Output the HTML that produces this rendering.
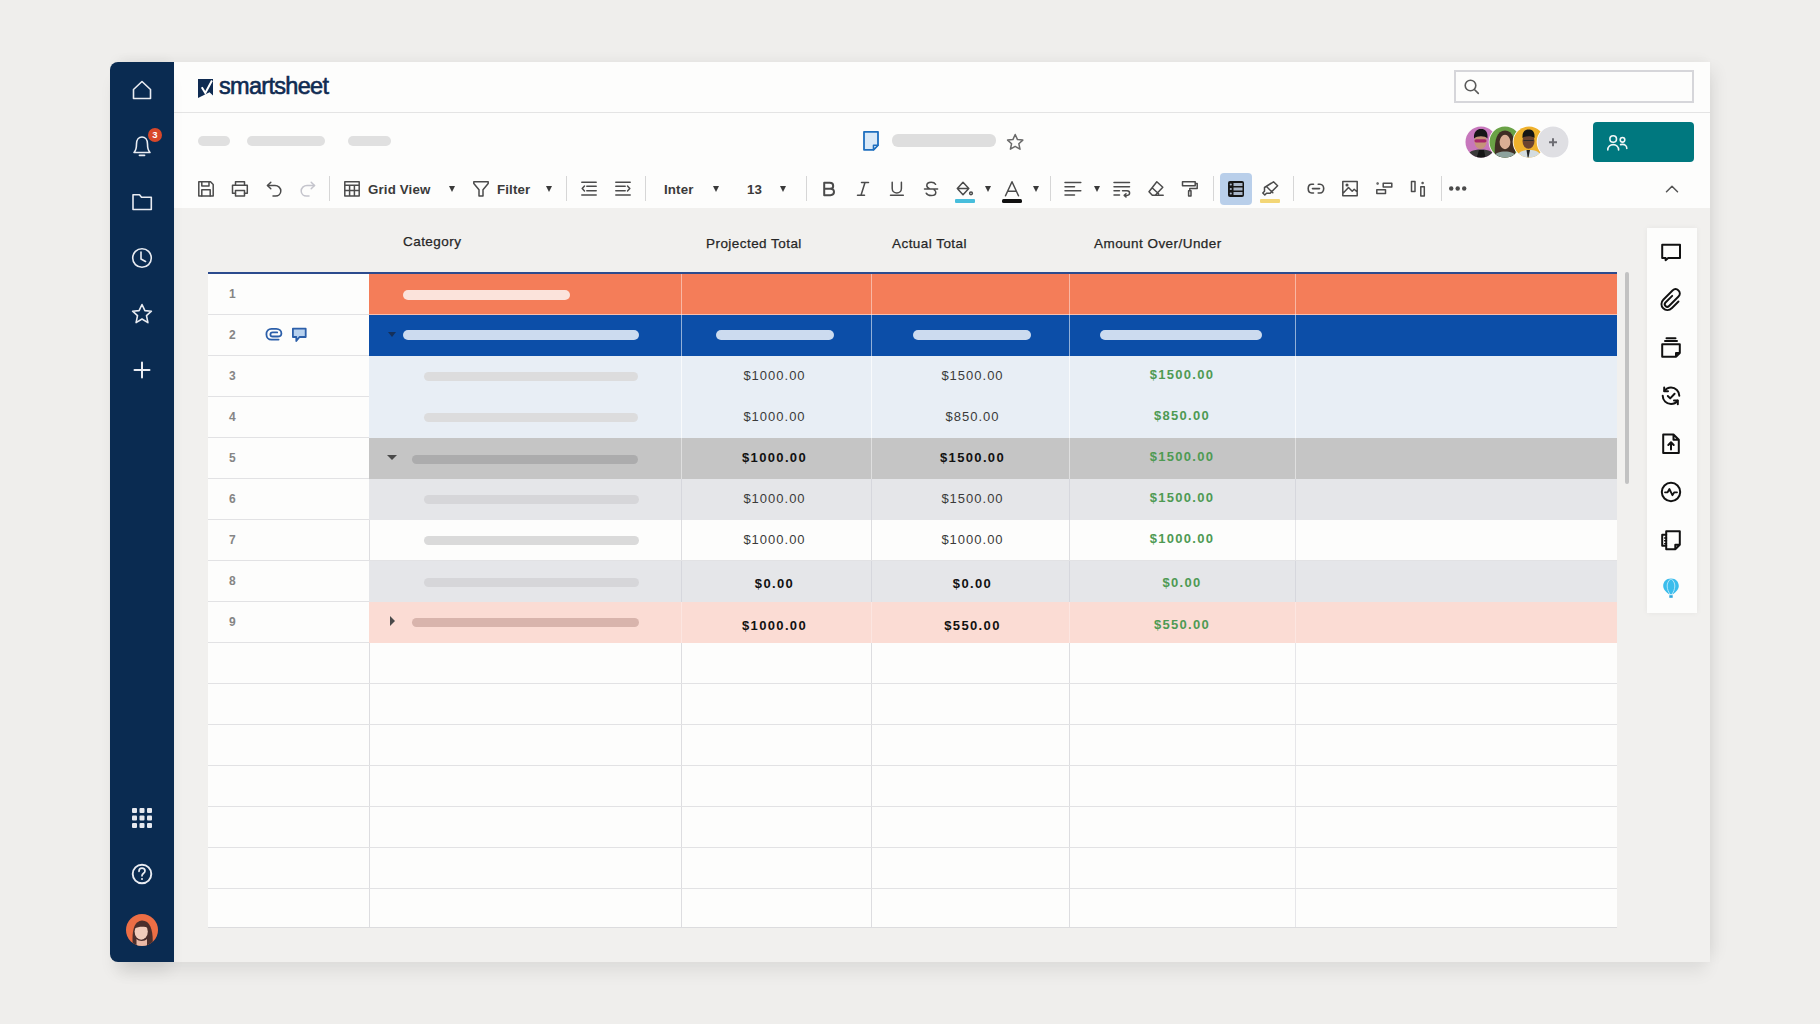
<!DOCTYPE html>
<html><head><meta charset="utf-8">
<style>
*{box-sizing:border-box;margin:0;padding:0}
html,body{width:1820px;height:1024px;overflow:hidden}
body{background:#EFEEEC;font-family:"Liberation Sans",sans-serif;position:relative}
.abs{position:absolute}
#win{left:118px;top:62px;width:1592px;height:900px;background:#F1F0EE;border-radius:0;box-shadow:0 14px 16px -4px rgba(0,0,0,0.07),12px 0 14px -6px rgba(0,0,0,0.06),0 -8px 10px -4px rgba(0,0,0,0.03);overflow:hidden}
#side{left:110px;top:62px;width:64px;height:900px;background:#0A2B51;border-radius:8px 0 0 8px;box-shadow:0 14px 16px -4px rgba(0,0,0,0.07),0 -8px 10px -4px rgba(0,0,0,0.03)}
#head{left:174px;top:62px;width:1536px;height:146px;background:#FDFDFC}
#hdiv{left:174px;top:112px;width:1536px;height:1px;background:#E4E4E4}
.pill{position:absolute;border-radius:6px}
.sic{position:absolute;left:132px;width:20px;height:20px}
.tb{position:absolute;top:180px;width:16px;height:16px}
.sep{position:absolute;top:176px;width:1px;height:25px;background:#D6D6D6}
.tt{position:absolute;top:182px;font-size:13.3px;font-weight:bold;color:#3A3A3A;line-height:16px;letter-spacing:0.15px}
.tri{position:absolute;top:186px;width:0;height:0;border-left:3.5px solid transparent;border-right:3.5px solid transparent;border-top:6px solid #3A3A3A}
.ch{position:absolute;top:236px;font-size:13.5px;color:#262626;line-height:16px;letter-spacing:0.45px;-webkit-text-stroke:0.25px #262626}

.row{position:absolute;left:0;width:1409px;height:41px;border-bottom:1px solid #DCDCDC}
.rn{position:absolute;left:0;top:0;width:161px;height:41px;background:#FDFDFC;border-right:1px solid #D8D8D8}
.rnum{position:absolute;left:22px;top:13px;font-size:12px;font-weight:bold;color:#858585;line-height:14px}
.cell{position:absolute;top:0;height:41px}
.num{position:absolute;font-size:13px;line-height:16px;letter-spacing:1px;color:#3A3A3A;text-align:center}
.b{font-weight:bold;color:#111;letter-spacing:1.35px}
.g{font-weight:bold;color:#4E9A53;letter-spacing:1.3px}
.vl{position:absolute;top:0;width:1px;height:656px}
</style></head><body>
<div id="win" class="abs"></div>
<div id="head" class="abs"></div>
<div id="hdiv" class="abs"></div>
<div id="side" class="abs"></div>

<!-- logo -->
<div class="abs" style="left:219px;top:72px;font-size:23.5px;color:#0F2B52;letter-spacing:-0.7px;-webkit-text-stroke:0.6px #0F2B52;line-height:28px">smartsheet</div>

<!-- breadcrumbs -->
<div class="pill" style="left:198px;top:136px;width:32px;height:10px;background:#E0E0E0"></div>
<div class="pill" style="left:247px;top:136px;width:78px;height:10px;background:#E0E0E0"></div>
<div class="pill" style="left:348px;top:136px;width:43px;height:10px;background:#E0E0E0"></div>
<div class="pill" style="left:892px;top:134px;width:104px;height:13px;background:#DEDEDE"></div>

<!-- search -->
<div class="abs" style="left:1454px;top:70px;width:240px;height:33px;border:2px solid #D6D6DA;background:#FDFDFC"></div>
<!-- share button -->
<div class="abs" style="left:1593px;top:122px;width:101px;height:40px;background:#00787F;border-radius:4px"></div>

<!-- toolbar text -->
<div class="tt" style="left:368px">Grid View</div>
<div class="tri" style="left:449px"></div>
<div class="tt" style="left:497px">Filter</div>
<div class="tri" style="left:546px"></div>
<div class="tt" style="left:664px">Inter</div>
<div class="tri" style="left:713px"></div>
<div class="tt" style="left:747px">13</div>
<div class="tri" style="left:780px"></div>
<div class="tri" style="left:985px"></div>
<div class="tri" style="left:1033px"></div>
<div class="tri" style="left:1094px"></div>
<div class="sep" style="left:329px"></div>
<div class="sep" style="left:566px"></div>
<div class="sep" style="left:645px"></div>
<div class="sep" style="left:806px"></div>
<div class="sep" style="left:1050px"></div>
<div class="sep" style="left:1213px"></div>
<div class="sep" style="left:1293px"></div>
<div class="sep" style="left:1441px"></div>
<div class="abs" style="left:1220px;top:173px;width:32px;height:32px;background:#B9CFEA;border-radius:4px"></div>

<!-- column headers -->
<div class="ch" style="left:403px;top:234px">Category</div>
<div class="ch" style="left:706px">Projected Total</div>
<div class="ch" style="left:892px">Actual Total</div>
<div class="ch" style="left:1094px">Amount Over/Under</div>

<!-- grid -->
<div class="abs" style="left:208px;top:272px;width:1409px;height:656px;background:#FDFDFC"></div>
<div class="abs" style="left:369px;top:272px;width:1px;height:656px;background:#DDDDE0"></div>
<div class="abs" style="left:681px;top:272px;width:1px;height:656px;background:#DDDDE0"></div>
<div class="abs" style="left:871px;top:272px;width:1px;height:656px;background:#DDDDE0"></div>
<div class="abs" style="left:1069px;top:272px;width:1px;height:656px;background:#DDDDE0"></div>
<div class="abs" style="left:1295px;top:272px;width:1px;height:656px;background:#E6E6E9"></div>
<div class="abs" style="left:208px;top:314px;width:1409px;height:1px;background:#E2E2E4"></div>
<div class="abs" style="left:208px;top:355px;width:1409px;height:1px;background:#E2E2E4"></div>
<div class="abs" style="left:208px;top:396px;width:1409px;height:1px;background:#E2E2E4"></div>
<div class="abs" style="left:208px;top:437px;width:1409px;height:1px;background:#E2E2E4"></div>
<div class="abs" style="left:208px;top:478px;width:1409px;height:1px;background:#E2E2E4"></div>
<div class="abs" style="left:208px;top:519px;width:1409px;height:1px;background:#E2E2E4"></div>
<div class="abs" style="left:208px;top:560px;width:1409px;height:1px;background:#E2E2E4"></div>
<div class="abs" style="left:208px;top:601px;width:1409px;height:1px;background:#E2E2E4"></div>
<div class="abs" style="left:208px;top:642px;width:1409px;height:1px;background:#E2E2E4"></div>
<div class="abs" style="left:208px;top:683px;width:1409px;height:1px;background:#E2E2E4"></div>
<div class="abs" style="left:208px;top:724px;width:1409px;height:1px;background:#E2E2E4"></div>
<div class="abs" style="left:208px;top:765px;width:1409px;height:1px;background:#E2E2E4"></div>
<div class="abs" style="left:208px;top:806px;width:1409px;height:1px;background:#E2E2E4"></div>
<div class="abs" style="left:208px;top:847px;width:1409px;height:1px;background:#E2E2E4"></div>
<div class="abs" style="left:208px;top:888px;width:1409px;height:1px;background:#E2E2E4"></div>
<div class="abs" style="left:369px;top:274px;width:1248px;height:41px;background:#F47D59"></div>
<div class="abs" style="left:681px;top:274px;width:1px;height:41px;background:rgba(255,255,255,0.45)"></div>
<div class="abs" style="left:871px;top:274px;width:1px;height:41px;background:rgba(255,255,255,0.45)"></div>
<div class="abs" style="left:1069px;top:274px;width:1px;height:41px;background:rgba(255,255,255,0.45)"></div>
<div class="abs" style="left:1295px;top:274px;width:1px;height:41px;background:rgba(255,255,255,0.45)"></div>
<div class="abs" style="left:369px;top:315px;width:1248px;height:41px;background:#0C4EA8"></div>
<div class="abs" style="left:681px;top:315px;width:1px;height:41px;background:rgba(255,255,255,0.55)"></div>
<div class="abs" style="left:871px;top:315px;width:1px;height:41px;background:rgba(255,255,255,0.55)"></div>
<div class="abs" style="left:1069px;top:315px;width:1px;height:41px;background:rgba(255,255,255,0.55)"></div>
<div class="abs" style="left:1295px;top:315px;width:1px;height:41px;background:rgba(255,255,255,0.55)"></div>
<div class="abs" style="left:369px;top:356px;width:1248px;height:41px;background:#E8EEF5"></div>
<div class="abs" style="left:681px;top:356px;width:1px;height:41px;background:rgba(255,255,255,0.7)"></div>
<div class="abs" style="left:871px;top:356px;width:1px;height:41px;background:rgba(255,255,255,0.7)"></div>
<div class="abs" style="left:1069px;top:356px;width:1px;height:41px;background:rgba(255,255,255,0.7)"></div>
<div class="abs" style="left:1295px;top:356px;width:1px;height:41px;background:rgba(255,255,255,0.7)"></div>
<div class="abs" style="left:369px;top:397px;width:1248px;height:41px;background:#E8EEF5"></div>
<div class="abs" style="left:681px;top:397px;width:1px;height:41px;background:rgba(255,255,255,0.7)"></div>
<div class="abs" style="left:871px;top:397px;width:1px;height:41px;background:rgba(255,255,255,0.7)"></div>
<div class="abs" style="left:1069px;top:397px;width:1px;height:41px;background:rgba(255,255,255,0.7)"></div>
<div class="abs" style="left:1295px;top:397px;width:1px;height:41px;background:rgba(255,255,255,0.7)"></div>
<div class="abs" style="left:369px;top:438px;width:1248px;height:41px;background:#C5C5C5"></div>
<div class="abs" style="left:681px;top:438px;width:1px;height:41px;background:rgba(255,255,255,0.45)"></div>
<div class="abs" style="left:871px;top:438px;width:1px;height:41px;background:rgba(255,255,255,0.45)"></div>
<div class="abs" style="left:1069px;top:438px;width:1px;height:41px;background:rgba(255,255,255,0.45)"></div>
<div class="abs" style="left:1295px;top:438px;width:1px;height:41px;background:rgba(255,255,255,0.45)"></div>
<div class="abs" style="left:369px;top:479px;width:1248px;height:41px;background:#E5E6E9"></div>
<div class="abs" style="left:681px;top:479px;width:1px;height:41px;background:rgba(200,200,210,0.5)"></div>
<div class="abs" style="left:871px;top:479px;width:1px;height:41px;background:rgba(200,200,210,0.5)"></div>
<div class="abs" style="left:1069px;top:479px;width:1px;height:41px;background:rgba(200,200,210,0.5)"></div>
<div class="abs" style="left:1295px;top:479px;width:1px;height:41px;background:rgba(200,200,210,0.5)"></div>
<div class="abs" style="left:369px;top:561px;width:1248px;height:41px;background:#E5E6E9"></div>
<div class="abs" style="left:681px;top:561px;width:1px;height:41px;background:rgba(200,200,210,0.5)"></div>
<div class="abs" style="left:871px;top:561px;width:1px;height:41px;background:rgba(200,200,210,0.5)"></div>
<div class="abs" style="left:1069px;top:561px;width:1px;height:41px;background:rgba(200,200,210,0.5)"></div>
<div class="abs" style="left:1295px;top:561px;width:1px;height:41px;background:rgba(200,200,210,0.5)"></div>
<div class="abs" style="left:369px;top:602px;width:1248px;height:41px;background:#FBDCD4"></div>
<div class="abs" style="left:681px;top:602px;width:1px;height:41px;background:rgba(255,255,255,0.3)"></div>
<div class="abs" style="left:871px;top:602px;width:1px;height:41px;background:rgba(255,255,255,0.3)"></div>
<div class="abs" style="left:1069px;top:602px;width:1px;height:41px;background:rgba(255,255,255,0.3)"></div>
<div class="abs" style="left:1295px;top:602px;width:1px;height:41px;background:rgba(255,255,255,0.3)"></div>
<div class="abs" style="left:369px;top:314px;width:1248px;height:1px;background:rgba(255,255,255,0.5)"></div>
<div class="abs" style="left:208px;top:314px;width:161px;height:1px;background:#E2E2E4"></div>
<div class="abs" style="left:208px;top:355px;width:161px;height:1px;background:#E2E2E4"></div>
<div class="abs" style="left:208px;top:396px;width:161px;height:1px;background:#E2E2E4"></div>
<div class="abs" style="left:208px;top:437px;width:161px;height:1px;background:#E2E2E4"></div>
<div class="abs" style="left:208px;top:478px;width:161px;height:1px;background:#E2E2E4"></div>
<div class="abs" style="left:208px;top:519px;width:161px;height:1px;background:#E2E2E4"></div>
<div class="abs" style="left:208px;top:560px;width:161px;height:1px;background:#E2E2E4"></div>
<div class="abs" style="left:208px;top:601px;width:161px;height:1px;background:#E2E2E4"></div>
<div class="abs" style="left:208px;top:642px;width:161px;height:1px;background:#E2E2E4"></div>
<div class="abs" style="left:208px;top:927px;width:1409px;height:1px;background:#DCDCDE"></div>
<div class="abs" style="left:208px;top:272px;width:1409px;height:2px;background:#2C4B8E"></div>
<div class="abs rnum" style="left:229px;top:287px">1</div>
<div class="abs rnum" style="left:229px;top:328px">2</div>
<div class="abs rnum" style="left:229px;top:369px">3</div>
<div class="abs rnum" style="left:229px;top:410px">4</div>
<div class="abs rnum" style="left:229px;top:451px">5</div>
<div class="abs rnum" style="left:229px;top:492px">6</div>
<div class="abs rnum" style="left:229px;top:533px">7</div>
<div class="abs rnum" style="left:229px;top:574px">8</div>
<div class="abs rnum" style="left:229px;top:615px">9</div>
<div class="pill" style="left:403px;top:290px;width:167px;height:10px;background:#FBE3DB;border-radius:5px"></div>
<div class="pill" style="left:403px;top:330px;width:236px;height:10px;background:#CCDBEF;border-radius:5px"></div>
<div class="pill" style="left:716px;top:330px;width:118px;height:10px;background:#CCDBEF;border-radius:5px"></div>
<div class="pill" style="left:913px;top:330px;width:118px;height:10px;background:#CCDBEF;border-radius:5px"></div>
<div class="pill" style="left:1100px;top:330px;width:162px;height:10px;background:#CCDBEF;border-radius:5px"></div>
<div class="pill" style="left:424px;top:372px;width:214px;height:9px;background:#DCDCDD;border-radius:5px"></div>
<div class="pill" style="left:424px;top:413px;width:214px;height:9px;background:#DCDCDD;border-radius:5px"></div>
<div class="pill" style="left:412px;top:455px;width:226px;height:9px;background:#ACACAD;border-radius:5px"></div>
<div class="pill" style="left:424px;top:495px;width:215px;height:9px;background:#D6D6D9;border-radius:5px"></div>
<div class="pill" style="left:424px;top:536px;width:215px;height:9px;background:#DADADA;border-radius:5px"></div>
<div class="pill" style="left:424px;top:578px;width:215px;height:9px;background:#D6D6D9;border-radius:5px"></div>
<div class="pill" style="left:412px;top:618px;width:227px;height:9px;background:#D8B4AC;border-radius:5px"></div>
<div class="abs" style="left:388px;top:332px;width:0;height:0;border-left:4px solid transparent;border-right:4px solid transparent;border-top:5px solid #15305A"></div>
<div class="abs" style="left:387px;top:455px;width:0;height:0;border-left:5.5px solid transparent;border-right:5.5px solid transparent;border-top:5px solid #4A4A4A"></div>
<div class="abs" style="left:390px;top:616px;width:0;height:0;border-top:5.5px solid transparent;border-bottom:5.5px solid transparent;border-left:5px solid #4A4A4A"></div>
<div class="num" style="left:679.5px;top:368px;width:190px">$1000.00</div>
<div class="num" style="left:873.5px;top:368px;width:198px">$1500.00</div>
<div class="num g" style="left:1069px;top:367px;width:226px">$1500.00</div>
<div class="num" style="left:679.5px;top:409px;width:190px">$1000.00</div>
<div class="num" style="left:873.5px;top:409px;width:198px">$850.00</div>
<div class="num g" style="left:1069px;top:408px;width:226px">$850.00</div>
<div class="num b" style="left:679.5px;top:450px;width:190px">$1000.00</div>
<div class="num b" style="left:873.5px;top:450px;width:198px">$1500.00</div>
<div class="num g" style="left:1069px;top:449px;width:226px">$1500.00</div>
<div class="num" style="left:679.5px;top:491px;width:190px">$1000.00</div>
<div class="num" style="left:873.5px;top:491px;width:198px">$1500.00</div>
<div class="num g" style="left:1069px;top:490px;width:226px">$1500.00</div>
<div class="num" style="left:679.5px;top:532px;width:190px">$1000.00</div>
<div class="num" style="left:873.5px;top:532px;width:198px">$1000.00</div>
<div class="num g" style="left:1069px;top:531px;width:226px">$1000.00</div>
<div class="num b" style="left:679.5px;top:576px;width:190px">$0.00</div>
<div class="num b" style="left:873.5px;top:576px;width:198px">$0.00</div>
<div class="num g" style="left:1069px;top:575px;width:226px">$0.00</div>
<div class="num b" style="left:679.5px;top:617.5px;width:190px">$1000.00</div>
<div class="num b" style="left:873.5px;top:617.5px;width:198px">$550.00</div>
<div class="num g" style="left:1069px;top:616.5px;width:226px">$550.00</div>


<!-- scrollbar -->
<div class="abs" style="left:1625px;top:272px;width:4px;height:212px;background:#C2C2C2;border-radius:2px"></div>
<!-- right panel -->
<div class="abs" style="left:1647px;top:228px;width:50px;height:385px;background:#FDFDFC;box-shadow:0 0 6px rgba(0,0,0,0.05)"></div>

<!-- sidebar icons -->
<svg class="abs" style="left:110px;top:62px" width="64" height="900" viewBox="110 62 64 900" fill="none" stroke="#E9ECF2" stroke-width="1.6" stroke-linejoin="round" stroke-linecap="round">
<path d="M133.5 89.5 L142 81.5 L150.5 89.5 V98.5 H133.5 Z"/>
<path d="M134 152.5 C136 150.5 136.5 148.5 136.5 144 C136.5 139.5 139 137 142 137 C145 137 147.5 139.5 147.5 144 C147.5 148.5 148 150.5 150 152.5 Z"/>
<path d="M139.5 155.3 H144.5" stroke-width="1.8"/>
<path d="M133 194.8 H139.5 L141.5 197.3 H151.3 V209.5 H133 Z"/>
<circle cx="142" cy="258" r="9.3"/>
<path d="M141 252 V259 L145.5 261.5"/>
<path d="M142 304.5 L144.9 310.6 L151.4 311.2 L146.5 315.6 L147.9 322.6 L142 319 L136.1 322.6 L137.5 315.6 L132.6 311.2 L139.1 310.6 Z"/>
<path d="M134.5 370 H149.5 M142 362.5 V377.5" stroke-width="2"/>
<circle cx="142" cy="874" r="9.3" stroke-width="1.9"/>
<path d="M139 871.3 C139 869.3 140.4 868.2 142 868.2 C143.7 868.2 145 869.3 145 871 C145 873.3 142 873.3 142 875.8" stroke-width="1.7"/>
</svg>
<div class="abs" style="left:148px;top:128px;width:14px;height:14px;border-radius:50%;background:#D8482A;color:#fff;font-size:9.5px;font-weight:bold;text-align:center;line-height:14px">3</div>
<div class="abs" style="left:141px;top:877.5px;width:2px;height:2px;background:#E9ECF2;border-radius:1px"></div>
<svg class="abs" style="left:132px;top:808px" width="20" height="20" fill="#E6E9EF">
<rect x="0" y="0" width="5" height="5" rx="1"/><rect x="7.5" y="0" width="5" height="5" rx="1"/><rect x="15" y="0" width="5" height="5" rx="1"/>
<rect x="0" y="7.5" width="5" height="5" rx="1"/><rect x="7.5" y="7.5" width="5" height="5" rx="1"/><rect x="15" y="7.5" width="5" height="5" rx="1"/>
<rect x="0" y="15" width="5" height="5" rx="1"/><rect x="7.5" y="15" width="5" height="5" rx="1"/><rect x="15" y="15" width="5" height="5" rx="1"/>
</svg>
<!-- user avatar -->
<svg class="abs" style="left:126px;top:914px" width="32" height="32" viewBox="0 0 32 32">
<defs><clipPath id="av"><circle cx="16" cy="16" r="16"/></clipPath></defs>
<g clip-path="url(#av)">
<rect width="32" height="32" fill="#EC6E45"/>
<path d="M7 33 C5.5 20 7 7 16 6.5 C25.5 6.5 27.5 19 26.5 33 Z" fill="#4B2F2C"/>
<path d="M10.5 33 V25 C12.5 27.5 19 27.5 21 25 V33 Z" fill="#EBB9A5"/>
<ellipse cx="15.2" cy="17.5" rx="6.6" ry="8.2" fill="#F2CDBB"/>
<path d="M8.6 14.5 C9.2 10 12.4 8.6 16 8.6 C19.6 8.6 22.4 10.4 22.6 14 C18.5 12.2 12.5 12.4 8.6 14.5 Z" fill="#4B2F2C"/>
</g>
</svg>

<!-- logo mark -->
<svg class="abs" style="left:197px;top:78px" width="18" height="22" viewBox="197 78 18 22">
<path d="M198 79 H213 V95.5 L209.5 92.3 L198 98 Z" fill="#0F2B52"/>
<path d="M201.8 87.2 L205.3 93 L212 80.5" fill="none" stroke="#fff" stroke-width="2" stroke-linejoin="miter"/>
</svg>
<!-- sheet icon -->
<svg class="abs" style="left:862px;top:130px" width="20" height="22" viewBox="862 130 20 22">
<path d="M864 131.8 H878 V145.2 L873.5 149.8 H864 Z" fill="#D9E9F8" stroke="#1E6FBF" stroke-width="1.8" stroke-linejoin="round"/>
<path d="M878 145.2 H873.5 V149.8 Z" fill="#fff" stroke="#1E6FBF" stroke-width="1.6" stroke-linejoin="round"/>
</svg>
<!-- star -->
<svg class="abs" style="left:1005px;top:131px" width="20" height="21" viewBox="1005 131 20 21" fill="none" stroke="#6A6A6A" stroke-width="1.5" stroke-linejoin="round">
<path d="M1015.2 134.5 L1017.5 139.6 L1022.8 140.1 L1018.8 143.7 L1020 149.2 L1015.2 146.4 L1010.4 149.2 L1011.6 143.7 L1007.6 140.1 L1012.9 139.6 Z"/>
</svg>
<!-- search -->
<svg class="abs" style="left:1462px;top:77px" width="20" height="20" viewBox="1462 77 20 20" fill="none" stroke="#5A5A5A" stroke-width="1.6" stroke-linecap="round">
<circle cx="1470.5" cy="85.5" r="5.3"/><path d="M1474.4 89.5 L1478.3 93.4"/>
</svg>
<!-- avatars -->
<svg class="abs" style="left:1462px;top:124px" width="110" height="36" viewBox="1462 124 110 36">
<defs>
<clipPath id="a1"><circle cx="1481" cy="142" r="15.5"/></clipPath>
<clipPath id="a2"><circle cx="1505" cy="142" r="15.5"/></clipPath>
<clipPath id="a3"><circle cx="1529" cy="142" r="15.5"/></clipPath>
</defs>
<g clip-path="url(#a1)"><rect x="1460" y="120" width="50" height="40" fill="#C777BC"/>
<path d="M1466 160 C1467 152 1472 149.5 1481 149.5 C1490 149.5 1494 152 1496 160 Z" fill="#3A3A3A"/>
<path d="M1476 160 L1479 150 H1484 L1486 160 Z" fill="#151515"/>
<ellipse cx="1480.5" cy="141" rx="6.2" ry="8" fill="#C69479"/>
<path d="M1474 138.5 C1473.5 131.5 1477 129 1481 129 C1485.5 129 1488 131.5 1487.5 138.5 C1485 135.5 1477 135.5 1474 138.5Z" fill="#161616"/>
<rect x="1474.5" y="139.2" width="12" height="3.2" rx="1.6" fill="#A8286A"/></g>
<circle cx="1505" cy="142" r="16.3" fill="#fff"/>
<g clip-path="url(#a2)"><rect x="1485" y="120" width="50" height="40" fill="#6AA246"/>
<path d="M1495 160 C1494 145 1495 130.5 1505 130.5 C1515 130.5 1516 145 1515 160 Z" fill="#3F2D24"/>
<path d="M1492 160 C1494 153 1499 151.5 1505 151.5 C1511 151.5 1516 153 1518 160 Z" fill="#8DA29D"/>
<ellipse cx="1505" cy="142" rx="5.4" ry="7.2" fill="#D9AE94"/></g>
<circle cx="1529" cy="142" r="16.3" fill="#fff"/>
<g clip-path="url(#a3)"><rect x="1510" y="120" width="50" height="40" fill="#EFB12C"/>
<path d="M1515 160 C1517 152 1522 150 1529 150 C1536 150 1541 152 1543 160 Z" fill="#D3DCDF"/>
<path d="M1526.5 150 L1528 160 L1530 150 Z" fill="#222"/>
<ellipse cx="1528.5" cy="141" rx="6" ry="7.8" fill="#6B4330"/>
<path d="M1522.5 138 C1522 131.5 1525 129.5 1528.5 129.5 C1532.5 129.5 1535 131.5 1534.5 138 C1532 135.5 1525 135.5 1522.5 138Z" fill="#161616"/>
<path d="M1523.5 140.5 H1533.5" stroke="#2A2A2A" stroke-width="1"/></g>
<circle cx="1553" cy="142" r="16.3" fill="#fff"/>
<circle cx="1553" cy="142" r="15.5" fill="#DFDFE3"/>
<path d="M1549 142.3 H1557 M1553 138.3 V146.3" stroke="#6E6E74" stroke-width="2"/>
</svg>
<!-- people icon -->
<svg class="abs" style="left:1605px;top:133px" width="25" height="20" viewBox="1605 133 25 20" fill="none" stroke="#F2F7F7" stroke-width="1.6" stroke-linecap="round">
<circle cx="1613.2" cy="139" r="3.3"/>
<path d="M1607.8 150 C1607.8 146.8 1610.2 144.6 1613.2 144.6 C1616.2 144.6 1618.6 146.8 1618.6 150"/>
<circle cx="1622.5" cy="139.8" r="2.3"/>
<path d="M1620.6 144.6 C1621.1 144.5 1621.8 144.4 1622.5 144.4 C1625 144.4 1626.8 146.2 1626.8 148.5"/>
</svg>
<!-- row 2 icons -->
<svg class="abs" style="left:262px;top:324px" width="50" height="22" viewBox="262 324 50 22" fill="none" stroke="#2C5FA9" stroke-width="1.8" stroke-linecap="round" stroke-linejoin="round">
<path d="M278.6 339.6 H271.5 C268.4 339.6 266.4 337.2 266.4 334.2 C266.4 331.2 268.4 328.8 271.5 328.8 H276.3 C279.3 328.8 281.4 331 281.4 333.4 C281.4 335.8 279.6 336.5 277.5 336.5 H272.7 C271.3 336.5 270.4 335.5 270.4 334.4 C270.4 333.3 271.3 332.4 272.7 332.4 H277.2"/>
<path d="M292.9 328.7 H305.7 V337 H299.5 L296.3 341 V337 H292.9 Z" fill="#B7D1EE"/>
</svg>

<!-- toolbar icons -->
<svg class="abs" style="left:190px;top:170px" width="1500" height="40" viewBox="190 170 1500 40" fill="none" stroke="#4B4B4B" stroke-width="1.5" stroke-linejoin="round" stroke-linecap="round">
<!-- save -->
<path d="M198.8 181.8 H210.5 L213.2 184.5 V196 H198.8 Z"/>
<path d="M201.8 181.8 V186 H209 V181.8"/>
<path d="M201.8 196 V189.8 H210.2 V196"/>
<!-- print -->
<path d="M235.5 185 V181.8 H244.5 V185"/>
<path d="M235.5 193.2 H232.5 V185.2 H247.3 V193.2 H244.5"/>
<path d="M235.5 190.5 H244.5 V196 H235.5 Z"/>
<!-- undo -->
<path d="M267.5 185.5 H275 C278.3 185.5 280.8 188 280.8 191 C280.8 194 278.3 196 275.5 196 H273"/>
<path d="M270.8 182.2 L267.5 185.5 L270.8 188.8"/>
<!-- redo -->
<g stroke="#C4C4CC"><path d="M314.5 185.5 H307 C303.7 185.5 301.2 188 301.2 191 C301.2 194 303.7 196 306.5 196 H309"/>
<path d="M311.2 182.2 L314.5 185.5 L311.2 188.8"/></g>
<!-- grid view -->
<path d="M344.8 181.8 H359.2 V196 H344.8 Z M344.8 185.2 H359.2 M344.8 190.6 H359.2 M349.6 185.2 V196 M354.4 185.2 V196"/>
<!-- filter -->
<path d="M473.8 181.8 H488.2 V183.6 L483 189.8 V196 H479 V189.8 L473.8 183.6 Z"/>
<!-- outdent -->
<path d="M581.8 182.2 H596.2 M586.8 186.2 H596.2 M586.8 190.8 H596.2 M581.8 195 H596.2"/>
<path d="M584.5 186 L582.2 188.5 L584.5 191"/>
<!-- indent -->
<path d="M615.8 182.2 H630.2 M615.8 186.2 H625.2 M615.8 190.8 H625.2 M615.8 195 H630.2"/>
<path d="M627.5 186 L629.8 188.5 L627.5 191"/>
<!-- B -->
<path d="M824.2 182.8 H829.8 C832 182.8 833.2 184.2 833.2 185.9 C833.2 187.6 832 188.8 829.8 188.8 H824.2 Z M824.2 188.8 H830.4 C832.8 188.8 834 190.3 834 192.1 C834 193.9 832.8 195.2 830.4 195.2 H824.2 Z" stroke-width="2"/>
<!-- I -->
<path d="M861.5 182.5 H868.5 M857.5 195.2 H864.5 M865 182.5 L861 195.2"/>
<!-- U -->
<path d="M892.2 182.2 V188.5 C892.2 191.2 894.3 193 896.8 193 C899.3 193 901.4 191.2 901.4 188.5 V182.2 M890.5 195.3 H903.3"/>
<!-- S -->
<path d="M935.6 184.3 C934.8 183 933.2 182.3 931.2 182.3 C928.6 182.3 926.8 183.6 926.8 185.6 C926.8 187 927.8 188 929.5 188.6 M934.2 189.8 C935.3 190.4 935.8 191.3 935.8 192.5 C935.8 194.5 934 195.6 931.2 195.6 C928.8 195.6 927 194.8 926.2 193.2 M924.5 188.9 H937.6"/>
<!-- bucket -->
<path d="M963 182.3 L968.8 188.5 L963 194.8 L957.3 188.5 Z M957.3 188.5 H968.8"/>
<circle cx="971" cy="193.3" r="1.4"/>
<!-- A -->
<path d="M1005.5 195.8 L1012 181.8 L1018.5 195.8 M1007.6 191.3 H1016.4"/>
<!-- align left -->
<path d="M1065 182.5 H1080.8 M1065 186.7 H1074.5 M1065 190.8 H1080.8 M1065 195 H1074.5"/>
<!-- wrap -->
<path d="M1114 182.5 H1129.5 M1114 186.7 H1129.5 M1114 190.8 H1119.5 M1114 195 H1119.5"/>
<path d="M1122.5 190.8 H1127 C1128.6 190.8 1129.6 191.8 1129.6 193.1 C1129.6 194.4 1128.6 195.4 1127 195.4 H1124.5 M1126 193.8 L1124.2 195.4 L1126 197"/>
<!-- eraser -->
<path d="M1156.8 181.8 L1162.8 187.2 L1155.3 195.3 H1152.3 L1149 191.8 Z M1152.6 188.2 L1158.6 193.8 M1155.3 195.3 H1163.2"/>
<!-- roller -->
<path d="M1182.5 181.8 H1195.2 V185.8 H1182.5 Z M1195.2 183.5 H1197.2 V188.5 H1189.8 V190.8 M1188.6 190.8 H1191 V196 H1188.6 Z"/>
<!-- highlighter -->
<path d="M1273.5 181.8 L1277.6 185.8 L1270.2 193.2 L1266.5 193.2 L1264.8 195 L1262.8 193 L1264.5 191.2 L1264.5 187.5 Z M1266.2 186.2 L1272.8 192.8"/>
<!-- link -->
<path d="M1313.5 184.2 H1311.8 C1309.6 184.2 1308.2 186.2 1308.2 188.6 C1308.2 191 1309.6 193 1311.8 193 H1313.5 M1318.2 184.2 H1320 C1322.2 184.2 1323.7 186.2 1323.7 188.6 C1323.7 191 1322.2 193 1320 193 H1318.2 M1312.5 188.6 H1319.5" stroke-width="1.6"/>
<!-- image -->
<path d="M1342.8 181.5 H1357.2 V195.8 H1342.8 Z M1342.8 193.5 L1348.5 187.5 L1352.2 191.2 L1354.2 189.2 L1357.2 192"/>
<circle cx="1347" cy="185" r="0.8"/>
<!-- align objects -->
<path d="M1383.2 183.2 H1391.8 V187 H1383.2 Z M1376.8 189.8 H1385.5 V193.6 H1376.8 Z"/>
<circle cx="1377.6" cy="183.6" r="0.5"/>
<!-- distribute -->
<path d="M1411.5 181.5 H1415 V191.5 H1411.5 Z M1420.8 186.8 H1424.3 V196 H1420.8 Z"/>
<circle cx="1422.6" cy="183" r="0.5"/>
<!-- chevron up -->
<path d="M1666.5 191.8 L1672 186.2 L1677.5 191.8" stroke="#555"/>
</svg>
<svg class="abs" style="left:1448px;top:184px" width="20" height="10" fill="#4B4B4B"><circle cx="3.2" cy="4.5" r="2.2"/><circle cx="9.7" cy="4.5" r="2.2"/><circle cx="16.2" cy="4.5" r="2.2"/></svg>
<div class="abs" style="left:955px;top:198.5px;width:20px;height:4px;background:#48BEDC;border-radius:1px"></div>
<div class="abs" style="left:1002px;top:199px;width:20px;height:4px;background:#111;border-radius:1.5px"></div>
<div class="abs" style="left:1260px;top:198.5px;width:20px;height:4px;background:#F3D676;border-radius:1px"></div>
<!-- grid list icon on highlighted -->
<svg class="abs" style="left:1227px;top:180px" width="18" height="18">
<rect x="1" y="1" width="16" height="16" rx="2" fill="#161616"/>
<rect x="6.5" y="3" width="9" height="3" fill="#A9B6C8"/><rect x="6.5" y="7.5" width="9" height="3" fill="#A9B6C8"/><rect x="6.5" y="12" width="9" height="3" fill="#A9B6C8"/>
<circle cx="3.8" cy="4.5" r="1.1" fill="#A9B6C8"/><circle cx="3.8" cy="9" r="1.1" fill="#A9B6C8"/><circle cx="3.8" cy="13.5" r="1.1" fill="#A9B6C8"/>
</svg>

<!-- right panel icons -->
<svg class="abs" style="left:1647px;top:228px" width="50" height="385" viewBox="1647 228 50 385" fill="none" stroke="#111" stroke-width="2" stroke-linejoin="round" stroke-linecap="round">
<!-- comment -->
<path d="M1662.2 244.8 H1680 V258 H1668.2 L1665.6 260.2 V258 H1662.2 Z"/>
<!-- paperclip -->
<path d="M1672.2 295.8 L1665.5 302.5 C1664.5 303.5 1664.5 305 1665.5 306 C1666.5 307 1668 307 1669 306 L1678.5 296.5 C1680.3 294.7 1680.3 292.2 1678.5 290.5 C1676.8 288.8 1674.3 288.8 1672.5 290.5 L1663.5 299.5 C1660.8 302.2 1660.8 306 1663.2 308.3 C1665.6 310.7 1669.3 310.6 1672 308 L1678.5 301.5" stroke-width="1.9"/>
<!-- stack -->
<path d="M1666.5 338.2 H1675.5 M1665 341 H1677"/>
<path d="M1662.2 344.2 H1679.8 V353 L1676 356.8 H1662.2 Z M1679.8 353 H1676 V356.8"/>
<!-- sync -->
<path d="M1664.5 391 C1666 388.8 1668.3 387.6 1671 387.6 C1675.6 387.6 1679.3 391.3 1679.3 395.8 M1677.5 400.6 C1676 402.8 1673.7 404 1671 404 C1666.4 404 1662.7 400.3 1662.7 395.8"/>
<path d="M1664.2 387.5 V391.3 H1668" /><path d="M1677.8 404.2 V400.4 H1674"/>
<path d="M1667.8 396 L1670.2 398.4 L1674.6 393.8"/>
<!-- file upload -->
<path d="M1663.2 434.5 H1673.5 L1678.8 439.8 V453 H1663.2 Z M1673.5 434.5 V439.8 H1678.8"/>
<path d="M1671 449.5 V442.5 M1668.3 445 L1671 442.3 L1673.7 445"/>
<!-- activity -->
<circle cx="1671" cy="492" r="9.2"/>
<path d="M1665 492.3 H1667.6 L1669.4 489 L1672.4 495.2 L1674.3 492.3 H1677" stroke-width="1.8"/>
<!-- doc -->
<path d="M1666.2 531.2 H1679.8 V544.8 L1675.3 549.2 H1666.2 Z M1679.8 544.8 H1675.3 V549.2"/>
<path d="M1666.2 534.8 H1662.2 V545.8 H1666.2"/>
<path d="M1664.6 538 H1666.5 M1664.6 540.8 H1666.5 M1664.6 543.6 H1666.5" stroke-width="1.4"/>
</svg>
<!-- balloon -->
<svg class="abs" style="left:1661px;top:577px" width="20" height="22" viewBox="0 0 20 22">
<path d="M10 1.5 C5 1.5 2.2 5 2.2 9 C2.2 12.6 5.6 15.3 8 17.3 H12 C14.4 15.3 17.8 12.6 17.8 9 C17.8 5 15 1.5 10 1.5 Z" fill="#3BBDEC"/>
<path d="M10 1.8 C7.2 3.5 6.2 6.5 6.2 9 C6.2 12.3 7.6 15 9 17.3 M10 1.8 C12.8 3.5 13.8 6.5 13.8 9 C13.8 12.3 12.4 15 11 17.3" stroke="#BFEAFA" stroke-width="0.9" fill="none"/>
<path d="M8.3 18.2 H11.7 V20.8 H8.3 Z" fill="#2FA7DD"/>
</svg>

</body></html>
